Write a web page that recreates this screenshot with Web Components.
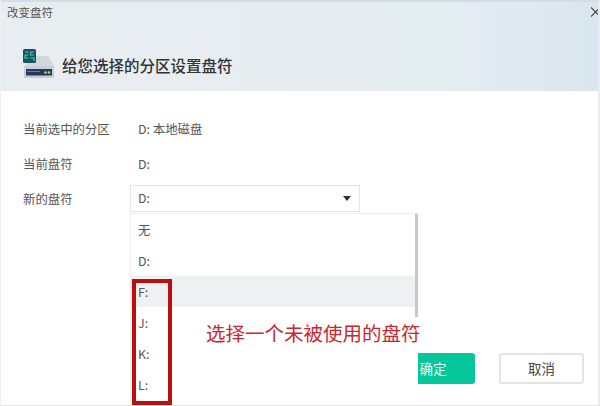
<!DOCTYPE html>
<html>
<head>
<meta charset="utf-8">
<style>
html, body { margin: 0; padding: 0; background: #fff; }
body { font-family: "Noto Sans CJK SC", "Open Sans", sans-serif; }
</style>
</head>
<body>
<drive-dialog>
  <dialog-header slot="header" title-text="改变盘符" heading="给您选择的分区设置盘符"></dialog-header>
  <info-row label="当前选中的分区" value="D: 本地磁盘"></info-row>
  <info-row label="当前盘符" value="D:"></info-row>
  <letter-select label="新的盘符" value="D:"></letter-select>
  <dialog-footer slot="footer"></dialog-footer>
</drive-dialog>

<script>
class DriveDialog extends HTMLElement {
  constructor() {
    super();
    var shadow = this.attachShadow({ mode: "open" });
    shadow.innerHTML = `
<style>
:host {
  display: flex;
  flex-direction: column;
  width: 600px;
  height: 406px;
  box-sizing: border-box;
  overflow: hidden;
  background: #fff;
  border-right: 2px solid #e9ecef;
  border-bottom: 1px solid #e6e6e6;
  border-left: 1px solid #eceeef;
  position: relative;
}
.body {
  flex: 1;
  display: flex;
  flex-direction: column;
  padding: 23px 0 0 22px;
}
</style>
<slot name="header"></slot>
<div class="body"><slot></slot></div>
<slot name="footer"></slot>
`;
  }
}

class DialogHeader extends HTMLElement {
  constructor() {
    super();
    var shadow = this.attachShadow({ mode: "open" });
    shadow.innerHTML = `
<style>
:host {
  display: flex;
  flex-direction: column;
  height: 91px;
  margin-left: -1px;
  margin-right: -2px;
  box-sizing: border-box;
  border-top: 2px solid #d3dde3;
  background: linear-gradient(90deg, #e9edf1 0%, #e6edf0 50%, #e4edf0 75%, #e1e9f2 88%, #d9e6ee 100%);
  color: #444;
}
.bar {
  display: flex;
  justify-content: space-between;
  align-items: center;
  height: 20px;
  padding: 0 0 0 7px;
  font-size: 11.5px;
  color: #555;
}
.main {
  display: flex;
  align-items: center;
  gap: 7px;
  padding: 27px 0 0 23px;
}
h1 {
  margin: 0;
  font-size: 15.5px;
  line-height: 22px;
  font-weight: 500;
  color: #333;
  position: relative;
  top: 1px;
}
svg { display: block; }
</style>
<div class="bar">
  <span id="title"></span>
  <svg width="9" height="10" viewBox="0 0 9 10"><path d="M0 0.5 9 9.5M9 0.5 0 9.5" stroke="#3c3c3c" stroke-width="1.1" fill="none"/></svg>
</div>
<div class="main">
  <svg width="32" height="30" viewBox="0 0 32 30">
    <path d="M9 7H25L31 17V29H2V17Z" fill="#d3d7dd"/>
    <rect x="1" y="17" width="30" height="12" rx="1" fill="#c9ced6"/>
    <rect x="3" y="20" width="26" height="6.5" fill="#283a5c"/>
    <rect x="4" y="22" width="13" height="1" fill="#6c7c9c"/>
    <circle cx="22.5" cy="23.5" r="1.3" fill="#8fe07e"/>
    <circle cx="26" cy="23.5" r="1.3" fill="#8fe07e"/>
    <rect x="0" y="0" width="13" height="14" rx="1.5" fill="#17545f"/>
    <path d="M2 3H5.5M2 6H5.5M2 6V9H5.5M7.5 3H11M7.5 3V6H11M7.5 9H11V12" stroke="#4fc9b8" stroke-width="1.2" fill="none"/>
  </svg>
  <h1 id="heading"></h1>
</div>
`;
  }

  connectedCallback() {
    this.shadowRoot.querySelector("#title").textContent = this.getAttribute("title-text");
    this.shadowRoot.querySelector("#heading").textContent = this.getAttribute("heading");
  }
}

class InfoRow extends HTMLElement {
  constructor() {
    super();
    var shadow = this.attachShadow({ mode: "open" });
    shadow.innerHTML = `
<style>
:host {
  display: grid;
  grid-template-columns: 115px 1fr;
  height: 35px;
  font-size: 12.4px;
  line-height: 30px;
  color: #555;
}
</style>
<span id="label"></span><span id="value"></span>
`;
  }

  connectedCallback() {
    this.shadowRoot.querySelector("#label").textContent = this.getAttribute("label");
    this.shadowRoot.querySelector("#value").textContent = this.getAttribute("value");
  }
}

class LetterSelect extends HTMLElement {
  constructor() {
    super();
    var shadow = this.attachShadow({ mode: "open" });
    shadow.innerHTML = `
<style>
:host {
  display: grid;
  grid-template-columns: 107px 230px;
  font-size: 12.4px;
  color: #555;
  position: relative;
  z-index: 2;
  margin-top: 1px;
}
.label { line-height: 28px; }
.box {
  height: 27px;
  box-sizing: border-box;
  border: 1px solid #e4e4e4;
  display: flex;
  align-items: center;
  justify-content: space-between;
  padding: 0 6px 0 7px;
  line-height: 25px;
  background: #fff;
}
.arrow {
  width: 0;
  height: 0;
  border-left: 4px solid transparent;
  border-right: 4px solid transparent;
  border-top: 5px solid #333;
  margin-right: 2px;
}
.menu {
  position: absolute;
  left: 107px;
  top: 28px;
  width: 288px;
  height: 193px;
  box-sizing: border-box;
  background: #fff;
  border-left: 1px solid #eee;
  border-top: 1px solid #eee;
  overflow: hidden;
}
.item {
  height: 31px;
  line-height: 32px;
  padding-left: 7px;
}
.item.hover { background: #eff0f2; }
.thumb {
  position: absolute;
  right: 0;
  top: 0;
  width: 3px;
  height: 103px;
  background: #c8c8c8;
}
.mark {
  position: absolute;
  left: 1px;
  top: 65px;
  width: 40px;
  height: 126px;
  box-sizing: border-box;
  border: 4px solid #bd0d0d;
}
.note {
  position: absolute;
  left: 183px;
  top: 135px;
  font-size: 19.5px;
  line-height: 26px;
  color: #c8282c;
  white-space: nowrap;
}
</style>
<span class="label" id="label"></span>
<div class="box"><span id="value"></span><span class="arrow"></span></div>
<div class="menu">
  <div class="item">无</div>
  <div class="item">D:</div>
  <div class="item hover">F:</div>
  <div class="item">J:</div>
  <div class="item">K:</div>
  <div class="item">L:</div>
  <div class="thumb"></div>
  <div class="mark"></div>
</div>
<div class="note">选择一个未被使用的盘符</div>
`;
  }

  connectedCallback() {
    this.shadowRoot.querySelector("#label").textContent = this.getAttribute("label");
    this.shadowRoot.querySelector("#value").textContent = this.getAttribute("value");
  }
}

class DialogFooter extends HTMLElement {
  constructor() {
    super();
    var shadow = this.attachShadow({ mode: "open" });
    shadow.innerHTML = `
<style>
:host {
  display: flex;
  justify-content: flex-end;
  gap: 24px;
  padding: 0 14px 21px 0;
  font-size: 13.5px;
}
button {
  font: inherit;
  height: 31px;
  padding: 0 0 2px;
  border-radius: 3px;
  box-sizing: border-box;
}
.ok {
  width: 84px;
  background: #05c79b;
  border: 0;
  color: #e9fff8;
}
.cancel {
  width: 85px;
  background: #fff;
  border: 2px solid #e4e4e4;
  color: #444;
}
</style>
<button class="ok">确定</button>
<button class="cancel">取消</button>
`;
  }
}

customElements.define("drive-dialog", DriveDialog);
customElements.define("dialog-header", DialogHeader);
customElements.define("info-row", InfoRow);
customElements.define("letter-select", LetterSelect);
customElements.define("dialog-footer", DialogFooter);
</script>
</body>
</html>
